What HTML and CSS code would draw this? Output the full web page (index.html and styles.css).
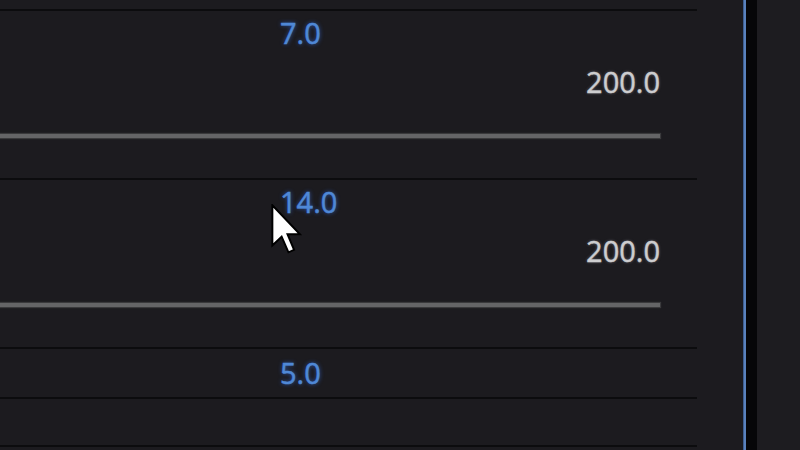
FILE: index.html
```html
<!DOCTYPE html>
<html>
<head>
<meta charset="utf-8">
<link rel="stylesheet" href="styles.css">
</head>
<body>
<div class="screen">
  <div class="panel">
    <div class="top-gap"></div>
    <div class="param">
      <div class="value">7.0</div>
      <div class="max">200.0</div>
      <div class="track"></div>
    </div>
    <div class="param">
      <div class="value">14.0</div>
      <div class="max">200.0</div>
      <div class="track"></div>
    </div>
    <div class="param short">
      <div class="value">5.0</div>
    </div>
    <div class="param empty"></div>
    <div class="param end"></div>
  </div>
  <div class="divider"></div>
  <div class="gutter"></div>
  <div class="side"></div>
  <svg class="cursor" width="32" height="50" viewBox="0 0 13 20.5">
    <path d="M0.5 0.5 L0.5 17 L4.3 13.4 L7.1 19.8 L9.4 18.8 L6.7 12.4 L11.8 12.4 Z" fill="#ffffff" stroke="#000000" stroke-width="0.8" stroke-linejoin="miter"/>
  </svg>
</div>
</body>
</html>
```
FILE: styles.css
```css
html, body {
  margin: 0;
  padding: 0;
  background: #1c1b1f;
}

.screen {
  position: relative;
  width: 800px;
  height: 450px;
  overflow: hidden;
  display: flex;
  font-family: "Open Sans", "Noto Sans", sans-serif;
}

.panel {
  width: 743px;
  flex: none;
  background: #1c1b1f;
}

.top-gap {
  height: 9px;
}

.param {
  width: 697px;
  height: 169px;
  box-sizing: border-box;
  border-top: 2px solid #0c0c0e;
  padding-top: 5px;
}

.value {
  margin-left: 280px;
  font-size: 29px;
  line-height: 34px;
  height: 34px;
  color: #4f88d6;
  -webkit-text-stroke: 0.5px #4f88d6;
  text-shadow: 0 0 4px rgba(50, 110, 230, 0.8);
}

.max {
  width: 660px;
  margin-top: 15px;
  text-align: right;
  font-size: 29px;
  line-height: 34px;
  height: 34px;
  color: #cdcdcf;
  -webkit-text-stroke: 0.4px #cdcdcf;
  text-shadow: 0 0 3px rgba(200, 200, 215, 0.5);
}

.track {
  width: 660px;
  height: 4px;
  margin-top: 35px;
  background: #656567;
  box-shadow: 0 0 1px 1px #3a3a3c;
}

.param.short {
  height: 50px;
  padding-top: 7px;
}

.param.empty {
  height: 48px;
}

.param.end {
  height: 10px;
}

.divider {
  width: 3px;
  flex: none;
  background: #5a82bd;
  box-shadow: inset 1px 0 0 #3e5f90;
}

.gutter {
  width: 11px;
  flex: none;
  background: #060608;
}

.side {
  flex: 1;
  background: #1d1c20;
}

.cursor {
  position: absolute;
  left: 271px;
  top: 204px;
}
```
